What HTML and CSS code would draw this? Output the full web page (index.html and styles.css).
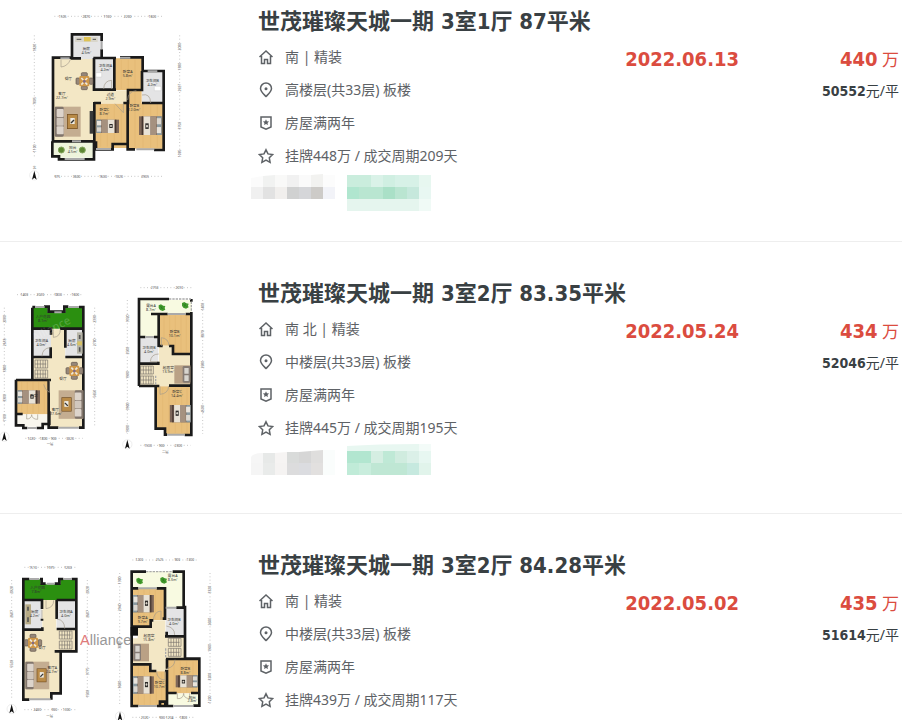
FILE: index.html
```html
<!DOCTYPE html>
<html lang="zh-CN">
<head>
    <meta charset="UTF-8">
    <meta name="viewport" content="width=device-width, initial-scale=1.0">
    <title>世茂璀璨天城一期 成交</title>
    <link rel="stylesheet" href="styles.css">
</head>
<body>
    <!-- shared icons and furniture -->
    <svg class="defs" aria-hidden="true">
        <defs>
            <symbol id="home" viewBox="0 0 16 16"><path d="M1.500 8 8 2l6.500 6M3.500 7v7.500h3v-4h3v4h3V7"/></symbol>
            <symbol id="pin" viewBox="0 0 16 16"><path d="M8 14.500C5 11.500 2.500 9.500 2.500 6.500a5.500 5.500 0 0 1 11 0C13.500 9.500 11 11.500 8 14.500z"/><circle class="solid" cx="8" cy="6.700" r="1.500"/></symbol>
            <symbol id="shield" viewBox="0 0 16 16"><path d="M3 2h10v10l-5 2.200L3 12z"/><path class="solid" d="m8 4.200.9 2 2.200.2-1.600 1.500.5 2.200L8 9l-2 1.100.5-2.200-1.600-1.500 2.200-.2z"/></symbol>
            <symbol id="star" viewBox="0 0 16 16"><path d="m8 1.800 2 4.100 4.600.7-3.300 3.200.8 4.500L8 12.200l-4.100 2.100.8-4.500L1.400 6.600 6 5.900z"/></symbol>

            <g id="bed">
                <rect width="68" height="40" fill="#7d6658"/>
                <rect width="14" height="40" fill="#8b9aa0"/>
                <rect x="2" y="4" width="13" height="13" fill="#e9e4dc"/>
                <rect x="2" y="23" width="13" height="13" fill="#dcd7cf"/>
                <rect x="16" width="17" height="40" fill="#a5917f"/>
                <rect x="34" width="20" height="40" fill="#e8e2d6"/>
                <rect x="56" width="4" height="40" fill="#443630"/>
                <rect x="39" y="13" width="10" height="12" fill="#2d2b29"/>
                <circle cx="44" cy="19" r="3" fill="#d9d3c8"/>
            </g>
            <g id="sofa">
                <rect width="78" height="90" fill="#c4ad91"/>
                <rect width="27" height="90" rx="4" fill="#81756c"/>
                <rect x="6" y="7" width="21" height="24" rx="3" fill="#ddd4cb"/>
                <rect x="6" y="33" width="21" height="24" rx="3" fill="#d1c7bd"/>
                <rect x="6" y="59" width="21" height="24" rx="3" fill="#ddd4cb"/>
                <rect x="37" y="22" width="32" height="45" fill="#6f4b20"/>
                <rect x="39" y="24" width="28" height="41" fill="#b98b48"/>
                <rect x="47" y="34" width="13" height="18" fill="#efece5"/>
                <path d="M49 49l9-9" stroke="#333" stroke-width="4"/>
            </g>
            <g id="dining">
                <g fill="#968779" stroke="#5d5249" stroke-width="2">
                    <rect x="17" y="1" width="18" height="11" rx="3"/>
                    <rect x="17" y="41" width="18" height="11" rx="3"/>
                    <rect x="1" y="17" width="11" height="19" rx="3"/>
                    <rect x="41" y="17" width="11" height="19" rx="3"/>
                </g>
                <rect x="11" y="11" width="30" height="31" rx="4" fill="#cf9748"/>
                <path d="M17 17l6 6m12-6-6 6m-12 14 6-6m12 6-6-6" stroke="#eee8dc" stroke-width="5"/>
                <circle cx="26" cy="27" r="4" fill="#806b88"/>
            </g>
            <g id="stairs" fill="none" stroke="#77716b" stroke-width="2">
                <path d="M0 0h38v24H0zM0 12h34M8 0v24M16 0v24M24 0v24M31 0v24M0 30h38v24H0zM0 42h34M8 30v24M16 30v24M24 30v24M31 30v24"/>
            </g>
            <g id="bush"><path d="M0 3l7-3 6 4 7 1-2 6 2 5-8 4-8-3-4-6z" fill="#43992c"/><path d="M4 6l10 8m-3-10-4 10" stroke="#267a1c" stroke-width="2"/></g>
            <g id="north"><circle cx="15" cy="15" r="14" fill="none" stroke="#ccc"/><path d="M15 1l7 27-7-6-7 6z" fill="#111"/></g>
        </defs>
    </svg>

    <ul class="list">
        <li class="item">
            <svg class="plan" viewBox="0 0 690 570" role="img" aria-label="3室1厅户型图">
                <g transform="translate(60 0)">
                    <path class="dim" d="M103 49h324M103 529h324M43 106v365M479 106v370"/>
                    <g class="num">
                        <text x="128" y="53">1505</text><text x="199" y="53">2870</text><text x="262" y="53">1100</text><text x="323" y="53">2200</text><text x="397" y="53">1600</text>
                        <text x="112" y="533">975</text><text x="170" y="533">3600</text><text x="249" y="533">1600</text><text x="297" y="533">1020</text><text x="375" y="533">2905</text>
                        <text transform="translate(47 143) rotate(-90)">1820</text><text transform="translate(47 303) rotate(-90)">7005</text><text transform="translate(47 445) rotate(-90)">1100</text>
                        <text transform="translate(483 140) rotate(-90)">2000</text><text transform="translate(483 200) rotate(-90)">1300</text><text transform="translate(483 263) rotate(-90)">2927</text><text transform="translate(483 377) rotate(-90)">3750</text><text transform="translate(483 460) rotate(-90)">1005</text>
                    </g>
                    <path class="floor" d="M99 175h121v96h105v40H222v113H99z"/>
                    <path class="tile" d="M156 104h87v73h-87zM222 177h62v92h-62zM366 215h64v95h-64z"/>
                    <path class="wood" d="M284 175h82v95h-82zM222 311h101v133H222zM323 270h42v40h66v136H323z"/>
                    <path class="grain" d="M304 179v88M325 179v88M345 179v88M242 315v125M262 315v125M283 315v125M304 315v110M345 275v168M369 312v131M392 312v131M412 312v131"/>
                    <path fill="#eef4dc" d="M97 426h124v47H97z"/>
                    <path class="wall" d="M156 177v-74h89v20M245 148v29M95 173h57M99 173v251h124V306M152 175h31M220 174h68M300 172h68v41h63v238M431 215v235h-29M345 448h-22V310M323 432h-45v16h-50v-24M222 174v95h61V174M222 309h21M265 269h23M310 309h14v-39h42v-57M366 213v36M366 309h66M97 424v45h20v9h105v-54"/>
                    <path class="window" d="M121 175h28M300 173h31M383 214h29M228 447h45M349 448h54M134 477h60M245 123v25M156 424h27"/>
                    <path class="door" d="M123 179v22q20-2 28-22M251 267q1-25 24-26v26M349 272q-25 2-26 28M366 285q25-6 26 24M285 311l25 27V311"/>
                    <rect x="165" y="111" width="68" height="15" fill="#d9d6cb"/><rect x="192" y="111" width="20" height="13" fill="#dfc354"/><path d="M170 118h14m34 0h10" stroke="#555" stroke-width="3"/>
                    <use href="#dining" x="167" y="217"/>
                    <use href="#sofa" x="104" y="320"/>
                    <rect x="209" y="333" width="11" height="68" fill="#3a3a3a"/>
                    <use href="#bed" x="229" y="359"/>
                    <use href="#bed" transform="translate(425 405) rotate(180) scale(1 1.4)"/>
                    <path d="M228 218h17v13h-17zM403 259h20v13h-20z" fill="#fff" stroke="#bbb"/>
                    <g fill="#5d8733" stroke="#84a55e" stroke-width="3"><circle cx="124" cy="450" r="9"/><circle cx="187" cy="450" r="9"/></g>
                    <g class="room">
                        <text x="199" y="151">厨房</text><text x="199" y="163">4.5m²</text>
                        <text x="145" y="239">餐厅</text>
                        <text x="126" y="284">客厅</text><text x="126" y="296">22.7m²</text>
                        <text x="256" y="200">卫生间A</text><text x="256" y="212">4.2m²</text>
                        <text x="323" y="219">卧室A</text><text x="323" y="230">5.8m²</text>
                        <text x="397" y="246">卫生间B</text><text x="397" y="258">4.2m²</text>
                        <text x="271" y="287">过道</text><text x="271" y="299">2.9m²</text>
                        <text x="253" y="333">卧室C</text><text x="253" y="345">8.7m²</text>
                        <text x="343" y="321">卧室B</text><text x="343" y="333">12.0m²</text>
                        <text x="158" y="447">阳台</text><text x="158" y="460">4.5m²</text>
                    </g>
                    <use href="#north" x="28" y="511"/>
                    <text class="num" x="43" y="508">北</text>
                </g>
            </svg>
            <div class="detail">
                <h2><a href="#">世茂璀璨天城一期 3室1厅 87平米</a></h2>
                <ul class="info">
                    <li><svg class="icon"><use href="#home"/></svg>南 | 精装</li>
                    <li><svg class="icon"><use href="#pin"/></svg>高楼层(共33层) 板楼</li>
                    <li><svg class="icon"><use href="#shield"/></svg>房屋满两年</li>
                    <li><svg class="icon"><use href="#star"/></svg>挂牌448万 / 成交周期209天</li>
                </ul>
                <svg class="agent" viewBox="0 0 180 40" aria-hidden="true">
                    <path fill="#fbfbfb" d="M0 6l12-2v11H0z"/><path fill="#f1f2f1" d="M12 4l12-1v12H12z"/><path fill="#f9f9f8" d="M24 3h12v12H24z"/><path fill="#f1f1f1" d="M36 3h12v12H36z"/><path fill="#fafafa" d="M48 3h12v12H48z"/><path fill="#f2f2f0" d="M60 3l12-1v13H60z"/><path fill="#fcfcfc" d="M72 3h12v12H72z"/>
                    <path fill="#f0f0f0" d="M0 15h12v12H0z"/><path fill="#e2e2e2" d="M12 15h12v12H12z"/><path fill="#f1efed" d="M24 15h12v12H24z"/><path fill="#d0d1d1" d="M36 15h12v12H36z"/><path fill="#d5d6d9" d="M48 15h12v12H48z"/><path fill="#cdcbc8" d="M60 15h12v12H60z"/><path fill="#f2f3f8" d="M72 15h12v12H72z"/>
                    <path fill="#caeddd" d="M96 3h24v12H96z"/><path fill="#daf2e8" d="M120 3h12v12h-12z"/><path fill="#d0efe2" d="M132 3h12v12h-12z"/><path fill="#d7f1e7" d="M144 3h24v12h-24z"/><path fill="#e7f7f0" d="M168 3h12v12h-12z"/>
                    <path fill="#b0e6cf" d="M96 15h12v12H96z"/><path fill="#b9e6d1" d="M108 15h24v12h-24z"/><path fill="#aae0c7" d="M132 15h12v12h-12z"/><path fill="#bae5d1" d="M144 15h12v12h-12z"/><path fill="#c6e8dc" d="M156 15h12v12h-12z"/><path fill="#e8f7f2" d="M168 15h12v12h-12z"/>
                    <path fill="#e5f5ee" d="M96 27h72v12H96z"/><path fill="#f0faf6" d="M168 27h12v12h-12z"/>
                </svg>
            </div>
            <div class="date">2022.06.13</div>
            <div class="price">
                <p class="total"><b>440</b> 万</p>
                <p class="unit"><b>50552</b>元/平</p>
            </div>
        </li>

        <li class="item">
            <svg class="plan" viewBox="0 0 690 570" role="img" aria-label="3室2厅户型图">
                <g transform="translate(0 24)">
                    <path class="dim" d="M51 44h197M76 475h172M13 83v360M284 83v357"/>
                    <g class="num">
                        <text x="73" y="48">1400</text><text x="121" y="48">2020</text><text x="174" y="48">1800</text><text x="226" y="48">1600</text>
                        <text x="94" y="479">1220</text><text x="131" y="479">1800</text><text x="161" y="479">900</text><text x="210" y="479">3020</text><text x="150" y="496">一层</text>
                        <text transform="translate(17 117) rotate(-90)">2000</text><text transform="translate(17 187) rotate(-90)">2618</text><text transform="translate(17 266) rotate(-90)">1800</text><text transform="translate(17 354) rotate(-90)">3300</text><text transform="translate(17 414) rotate(-90)">1100</text>
                        <text transform="translate(288 117) rotate(-90)">2330</text><text transform="translate(288 187) rotate(-90)">2700</text><text transform="translate(288 341) rotate(-90)">5650</text>
                    </g>
                    <path class="floor" d="M98 231h55v-85h43v87h56v211H150V302H98z"/>
                    <path class="grass" d="M97 83h46v15h53V83h54v63H97z"/>
                    <path class="tile" d="M98 146h55v84H98zM196 146h54v86h-54z"/>
                    <path class="wood" d="M48 302h101v101H48z"/><path class="grain" d="M65 306v94M82 306v94M99 306v94M116 306v94M133 306v94"/>
                    <path fill="#f8f6ee" d="M48 404h100v36H48z"/>
                    <path class="wall" d="M97 83v220M97 81h9M132 80h14v15h47V80h12M237 81h13v362h-13M175 443h-29V302h-4M98 146h55v18M152 202v29H98M180 146h70M196 146v57M196 231h54M48 300h105M48 299v137h22v8h12M110 444h18v-12h20v-38M48 402h20"/>
                    <path class="window" d="M106 81h28M205 81h32M175 443h62M82 444h28M163 97h22"/>
                    <path class="door" d="M160 148v24q21-1 21-24M151 203q-24 1-25 26M80 402v15q14 0 15-13 1 14 18 14v-15M148 302v35q-13-6-17-24"/>
                    <rect x="231" y="157" width="17" height="64" fill="#b7b5a8"/><path d="M239 165v12m0 25v13" stroke="#555" stroke-width="5"/><rect x="232" y="184" width="14" height="12" fill="#d7c266"/>
                    <use href="#stairs" x="105" y="240"/>
                    <use href="#dining" x="197" y="246"/>
                    <use href="#sofa" transform="translate(250 331) scale(-.95 .95)"/>
                    <use href="#bed" x="52" y="331"/>
                    <g class="room">
                        <text x="129" y="114">入户花园</text><text x="129" y="126">8.1m²</text>
                        <text x="124" y="187">卫生间A</text><text x="124" y="199">4.0m²</text>
                        <text x="216" y="187">厨房</text><text x="216" y="199">4.6m²</text>
                        <text x="189" y="299">餐厅</text><text x="166" y="394">客厅</text><text x="168" y="406">27.6m²</text>
                        <text x="102" y="351">卧室</text>
                    </g>
                    <text class="mark" transform="translate(104 185) rotate(-27)">Alliance</text>
                    <use href="#north" x="-2" y="455"/>
                </g>
                <g transform="translate(345 24)">
                    <path class="dim" d="M76 23h155M76 496h151M37 60v402M263 60v402"/>
                    <g class="num">
                        <text x="119" y="27">2750</text><text x="193" y="27">2010</text><text x="99" y="500">1500</text><text x="140" y="500">900</text><text x="190" y="500">2300</text><text x="151" y="518">二层</text>
                        <text transform="translate(41 115) rotate(-90)">3320</text><text transform="translate(41 212) rotate(-90)">2500</text><text transform="translate(41 285) rotate(-90)">1900</text><text transform="translate(41 379) rotate(-90)">3900</text><text transform="translate(41 447) rotate(-90)">1300</text>
                        <text transform="translate(267 80) rotate(-90)">1400</text><text transform="translate(267 162) rotate(-90)">3870</text><text transform="translate(267 254) rotate(-90)">2900</text><text transform="translate(267 387) rotate(-90)">4500</text>
                    </g>
                    <path fill="#f8fae1" d="M72 60h158v42h-99v68H72z"/>
                    <path class="wood" d="M131 102h97v119h-53v-24h-44zM124 319h104v143h-76v-17h-28z"/>
                    <path class="grain" d="M147 106v87M164 106v87M181 106v112M198 106v112M214 106v112M143 323v118M162 323v136M181 323v136M200 323v136M216 323v136"/>
                    <path class="tile" d="M74 173h56v78H74z"/>
                    <path class="floor" d="M74 254h58v-57h43v24h53v97H74z"/>
                    <path class="wall" d="M72 318V57h90M72 318h61M229 57v8M229 96v369h-20M156 464h-6v-18h-28V319M108 102h50M212 102h17M131 102v99M131 198h12M162 198h12v24h55M72 171h19M117 171h14M72 251h58v-6M162 317h67"/>
                    <path class="window" d="M156 464h54M158 102h54M91 171h26"/>
                    <path class="dotted" d="M162 57h66M229 65v30M122 287v27"/>
                    <path class="door" d="M139 198v-25q22 2 23 25M131 222q-23 0-25 23h25M135 319v24q25-2 26-25"/>
                    <use href="#bush" x="131" y="73"/><use href="#bush" x="201" y="66"/>
                    <use href="#stairs" x="77" y="258"/>
                    <rect x="178" y="256" width="48" height="55" fill="#baa185"/><rect x="203" y="258" width="23" height="50" rx="4" fill="#857b74"/><path d="M208 264h13v17h-13zm0 22h13v17h-13z" fill="#d7d4ce"/>
                    <use href="#bed" transform="translate(227 427) scale(-.92 1.3) translate(0 -40)"/>
                    <g class="room">
                        <text x="108" y="80">露台A</text><text x="108" y="92">8.7m²</text><text x="179" y="159">卧室B</text><text x="179" y="171">10.1m²</text>
                        <text x="102" y="208">卫生间B</text><text x="102" y="220">4.0m²</text><text x="160" y="267">起居室</text><text x="160" y="278">13.9m²</text>
                        <text x="186" y="339">卧室C</text><text x="186" y="351">14.4m²</text>
                    </g>
                    <use href="#north" x="22" y="478"/>
                </g>
            </svg>
            <div class="detail">
                <h2><a href="#">世茂璀璨天城一期 3室2厅 83.35平米</a></h2>
                <ul class="info">
                    <li><svg class="icon"><use href="#home"/></svg>南 北 | 精装</li>
                    <li><svg class="icon"><use href="#pin"/></svg>中楼层(共33层) 板楼</li>
                    <li><svg class="icon"><use href="#shield"/></svg>房屋满两年</li>
                    <li><svg class="icon"><use href="#star"/></svg>挂牌445万 / 成交周期195天</li>
                </ul>
                <svg class="agent" viewBox="0 0 180 40" aria-hidden="true">
                    <path fill="#f6f6f6" d="M0 19V13q2-4 12-4v10z"/><path fill="#e7e9e8" d="M12 9h12v10H12z"/><path fill="#f6f4f3" d="M24 9l12-1v11H24z"/><path fill="#d9dbda" d="M36 8h12v11H36z"/><path fill="#d6d6d6" d="M48 8l12-1v12H48z"/><path fill="#dfdedd" d="M60 7l12-1v13H60z"/><path fill="#fafdfc" d="M72 6h12v13H72z"/>
                    <path fill="#f5f5f5" d="M0 19h12v12H0z"/><path fill="#e9ebea" d="M12 19h12v12H12z"/><path fill="#f5f3f2" d="M24 19h12v12H24z"/><path fill="#dcdcdd" d="M36 19h12v12H36z"/><path fill="#dbdce0" d="M48 19h12v12H48z"/><path fill="#e2e0df" d="M60 19h12v12H60z"/><path fill="#fafdfc" d="M72 19h12v12H72z"/>
                    <path fill="#e8f7f1" d="M96 2q30-2 72-2v7H96z"/><path fill="#f3fbf8" d="M168 0h12v7h-12z"/>
                    <path fill="#b2e6d0" d="M96 7h24v12H96z"/><path fill="#d5eee2" d="M120 7h12v12h-12z"/><path fill="#bfe9d6" d="M132 7h12v12h-12z"/><path fill="#d0ecdf" d="M144 7h12v12h-12z"/><path fill="#dbf0e8" d="M156 7h12v12h-12z"/><path fill="#e7f7f1" d="M168 7h12v12h-12z"/>
                    <path fill="#c0ebd8" d="M96 19h12v12H96z"/><path fill="#c9eddd" d="M108 19h12v12h-12z"/><path fill="#bfe7d4" d="M120 19h36v12h-36z"/><path fill="#c6e9df" d="M156 19h12v12h-12z"/><path fill="#e1f4eb" d="M168 19h12v12h-12z"/>
                </svg>
            </div>
            <div class="date">2022.05.24</div>
            <div class="price">
                <p class="total"><b>434</b> 万</p>
                <p class="unit"><b>52046</b>元/平</p>
            </div>
        </li>

        <li class="item">
            <svg class="plan" viewBox="0 0 690 528" role="img" aria-label="3室2厅户型图">
                <g transform="translate(0 18)">
                    <path class="dim" d="M73 52h154M73 479h154M35 90v358M262 90v353"/>
                    <g class="num">
                        <text x="99" y="56">1510</text><text x="152" y="56">1975</text><text x="204" y="56">1200</text><text x="112" y="483">2400</text><text x="163" y="483">900</text><text x="200" y="483">1300</text><text x="149" y="502">一层</text>
                        <text transform="translate(39 120) rotate(-90)">2020</text><text transform="translate(39 192) rotate(-90)">2607</text><text transform="translate(39 341) rotate(-90)">5520</text><text transform="translate(266 120) rotate(-90)">2020</text><text transform="translate(266 192) rotate(-90)">2607</text><text transform="translate(266 364) rotate(-90)">3775</text><text transform="translate(266 431) rotate(-90)">1500</text>
                    </g>
                    <path class="floor" d="M72 239h55v-89h42v88h59v66h-48v126h-26v18H72z"/>
                    <path class="grass" d="M72 88h50v15h59V88h46v62H72z"/>
                    <path class="tile" d="M73 151h53v87H73zM170 151h57v86h-57z"/>
                    <path class="wall" d="M88 449H70V87h18M120 87h5v14h12M164 101h14V87h12M215 87h14v217h-65M182 304v126h-28v19M72 150h54v27M126 206v6M127 232v7H72M170 150h59M170 150v57M170 237h60"/>
                    <path class="window" d="M88 87h30M190 87h26M140 101h24M88 448h64"/>
                    <path class="door" d="M138 151v25q23-3 23-25M171 207q23 3 23 29M126 180v27"/>
                    <rect x="76" y="163" width="17" height="60" fill="#b6aa85"/><path d="M84 170v12m0 20v14" stroke="#555" stroke-width="5"/>
                    <use href="#stairs" x="178" y="243"/>
                    <use href="#dining" x="73" y="252"/>
                    <use href="#sofa" transform="translate(76 335) scale(.92)"/>
                    <g class="room">
                        <text x="113" y="118">入户花园</text><text x="109" y="130">7.8m²</text><text x="104" y="190">厨房</text><text x="104" y="202">4.2m²</text><text x="198" y="190">卫生间A</text><text x="198" y="202">4.0m²</text>
                        <text x="126" y="298">餐厅</text><text x="157" y="356">客厅A</text><text x="157" y="368">24.7m²</text>
                    </g>
                    <use href="#north" x="20" y="462"/>
                </g>
                <g transform="translate(225 18)">
                    <path class="dim" d="M172 30h196M172 502h184M134 69v398M405 69v398"/>
                    <g class="num">
                        <text x="193" y="34">1200</text><text x="254" y="34">2525</text><text x="307" y="34">900</text><text x="346" y="34">1300</text><text x="209" y="506">2320</text><text x="261" y="506">900</text><text x="284" y="506">1234</text><text x="325" y="506">1800</text>
                        <text transform="translate(138 91) rotate(-90)">1300</text><text transform="translate(138 172) rotate(-90)">2940</text><text transform="translate(138 285) rotate(-90)">3000</text><text transform="translate(138 404) rotate(-90)">3600</text>
                        <text transform="translate(409 119) rotate(-90)">3320</text><text transform="translate(409 215) rotate(-90)">2600</text><text transform="translate(409 294) rotate(-90)">1900</text><text transform="translate(409 380) rotate(-90)">3200</text><text transform="translate(409 448) rotate(-90)">1200</text>
                    </g>
                    <path fill="#f8fae1" d="M169 64h156v108h-53v-58H169zM278 431h93v37h-93z"/>
                    <path class="wood" d="M172 115h98v95h-46v20h-52zM173 344h52v20h50v103H173zM278 330h94v100h-94z"/>
                    <path class="grain" d="M190 119v107M207 119v107M224 119v88M241 119v88M258 119v88M190 348v117M208 348v117M226 368v97M244 368v97M260 368v97M297 335v93M316 335v93M335 335v93M354 335v93"/>
                    <path class="tile" d="M272 173h57v85h-57z"/>
                    <path class="floor" d="M188 231h40v-20h43v48h56v68h-50v36h-46v-21h-58v-77h15z"/>
                    <path class="wall" d="M170 231V65h43M293 65h33v106h4v155h43v141h-18M330 173h-26M270 173v-58h-25M190 115h-20M270 173v33h-7M235 211h-8v19h-58M270 259h59M275 245v15M273 327h100M170 343h56v20h18M270 363h6v105h-30M170 230v238h20M276 326v30M276 429h29M348 429h25M255 468v-13h16v13h24"/>
                    <path fill="#111" d="M167 231h22v26h-22z"/>
                    <path class="window" d="M190 468h56M295 468h60M190 115h55M272 173h31"/>
                    <path class="dotted" d="M213 65h80M272 295v30"/>
                    <path class="door" d="M258 210v-27q-20 1-23 26M274 228q25 4 25 27M245 364q1 25 25 26v-27M276 355q23-3 24-26M307 430v16q18 1 19-16 0 15 18 16v-16"/>
                    <use href="#bush" x="184" y="83"/><use href="#bush" x="256" y="81"/>
                    <use href="#bed" transform="translate(174 135) scale(.92 1.3)"/>
                    <use href="#bed" transform="translate(174 379) scale(.92 1.3)"/>
                    <use href="#bed" transform="translate(368 412) rotate(180) scale(.97 .9)"/>
                    <use href="#stairs" x="280" y="265"/>
                    <rect x="174" y="281" width="48" height="53" fill="#baa185"/><rect x="175" y="282" width="23" height="50" rx="4" fill="#857b74"/><path d="M181 287h13v18h-13zm0 23h13v18h-13z" fill="#d7d4ce"/>
                    <g class="room">
                        <text x="293" y="82">露台A</text><text x="293" y="94">8.3m²</text><text x="203" y="206">卧室A</text><text x="203" y="218">9.7m²</text><text x="297" y="213">卫生间B</text><text x="297" y="225">4.0m²</text>
                        <text x="222" y="262">起居室</text><text x="222" y="274">15.8m²</text><text x="331" y="360">卧室B</text><text x="331" y="371">8.8m²</text><text x="254" y="402">卧室C</text><text x="254" y="414">10.7m²</text><text x="352" y="446">阳台</text><text x="352" y="457">2.8m²</text>
                    </g>
                    <use href="#north" x="120" y="484"/>
                    <text class="brand" x="15" y="285"><tspan>A</tspan>lliance</text>
                </g>
            </svg>
            <div class="detail">
                <h2><a href="#">世茂璀璨天城一期 3室2厅 84.28平米</a></h2>
                <ul class="info">
                    <li><svg class="icon"><use href="#home"/></svg>南 | 精装</li>
                    <li><svg class="icon"><use href="#pin"/></svg>中楼层(共33层) 板楼</li>
                    <li><svg class="icon"><use href="#shield"/></svg>房屋满两年</li>
                    <li><svg class="icon"><use href="#star"/></svg>挂牌439万 / 成交周期117天</li>
                </ul>
            </div>
            <div class="date">2022.05.02</div>
            <div class="price">
                <p class="total"><b>435</b> 万</p>
                <p class="unit"><b>51614</b>元/平</p>
            </div>
        </li>
    </ul>
</body>
</html>
```
FILE: styles.css
```css
body {
    margin: 0;
    background-color: #fff;
    font-family: "Noto Sans", "Noto Sans CJK SC", sans-serif;
    font-size: 14px;
    color: #5e6266;
}
ul, h2, p {
    margin: 0;
    padding: 0;
    list-style: none;
}
.defs {
    display: block;
    width: 0;
    height: 0;
}
.list {
    margin-right: 14px;
}
.item {
    display: flex;
    align-items: flex-start;
    padding: 30px 3px 30px 0;
    border-bottom: 1px solid #eee;
}
.item:first-child {
    padding-top: 0;
}
.item:last-child {
    padding-bottom: 0;
    border-bottom: none;
}
.plan {
    flex: none;
    width: 230px;
    height: 190px;
    margin-right: 28px;
}
.item:last-child .plan {
    height: 176px;
}
.detail {
    flex: 1;
    min-width: 0;
}
.detail h2 {
    font-family: "DejaVu Sans Condensed", "Noto Sans CJK SC", sans-serif;
    font-size: 22px;
    line-height: 43px;
    font-weight: bold;
    white-space: nowrap;
}
.detail h2 a {
    color: #394043;
    text-decoration: none;
}
.info {
    margin-top: -3px;
}
.info li {
    display: flex;
    align-items: center;
    height: 33px;
    line-height: 33px;
    font-weight: 400;
}
.icon {
    width: 16px;
    height: 16px;
    margin-right: 11px;
    fill: none;
    stroke: #5e6266;
    stroke-width: 1.5;
}
.solid {
    fill: #5e6266;
    stroke: none;
}
.agent {
    display: block;
    width: 180px;
    height: 40px;
    margin: 0 0 -1px -7px;
}
.date, .total {
    margin-top: 39px;
    font-size: 20px;
    line-height: 40px;
    color: #db4c3f;
}
.date, .price b {
    font-family: "DejaVu Sans Condensed", sans-serif;
    font-weight: bold;
}
.date, .price {
    flex: none;
}
.price {
    width: 160px;
    text-align: right;
}
.total {
    font-size: 17px;
}
.total b {
    font-size: 20px;
}
.unit {
    line-height: 22px;
    color: #394043;
}

/* floor plans */
.wall {
    fill: none;
    stroke: #1a1a1a;
    stroke-width: 8;
}
.window {
    fill: none;
    stroke: #aaa;
    stroke-width: 6;
}
.dotted {
    fill: none;
    stroke: #aaa;
    stroke-width: 4;
    stroke-dasharray: 7 3;
}
.door {
    fill: none;
    stroke: #a39a8b;
    stroke-width: 2;
}
.floor {
    fill: #f3e7c5;
}
.grass {
    fill: #2b8f10;
}
.wood {
    fill: #e9c07c;
}
.grain {
    fill: none;
    stroke: #dcae66;
    stroke-width: 1;
}
.tile {
    fill: #e4e4e5;
}
.dim {
    fill: none;
    stroke: #aaa;
    stroke-width: 2;
    stroke-dasharray: 3 7;
}
.num, .room {
    font-size: 10px;
    fill: #555;
    text-anchor: middle;
}
.room {
    font-size: 11px;
    fill: #333;
}
.mark {
    font-size: 34px;
    fill: #fff;
    opacity: 0.2;
}
.brand {
    font-family: "Liberation Sans", sans-serif;
    font-size: 44px;
    fill: #555;
    opacity: 0.6;
}
.brand tspan {
    fill: #c22;
}
```
